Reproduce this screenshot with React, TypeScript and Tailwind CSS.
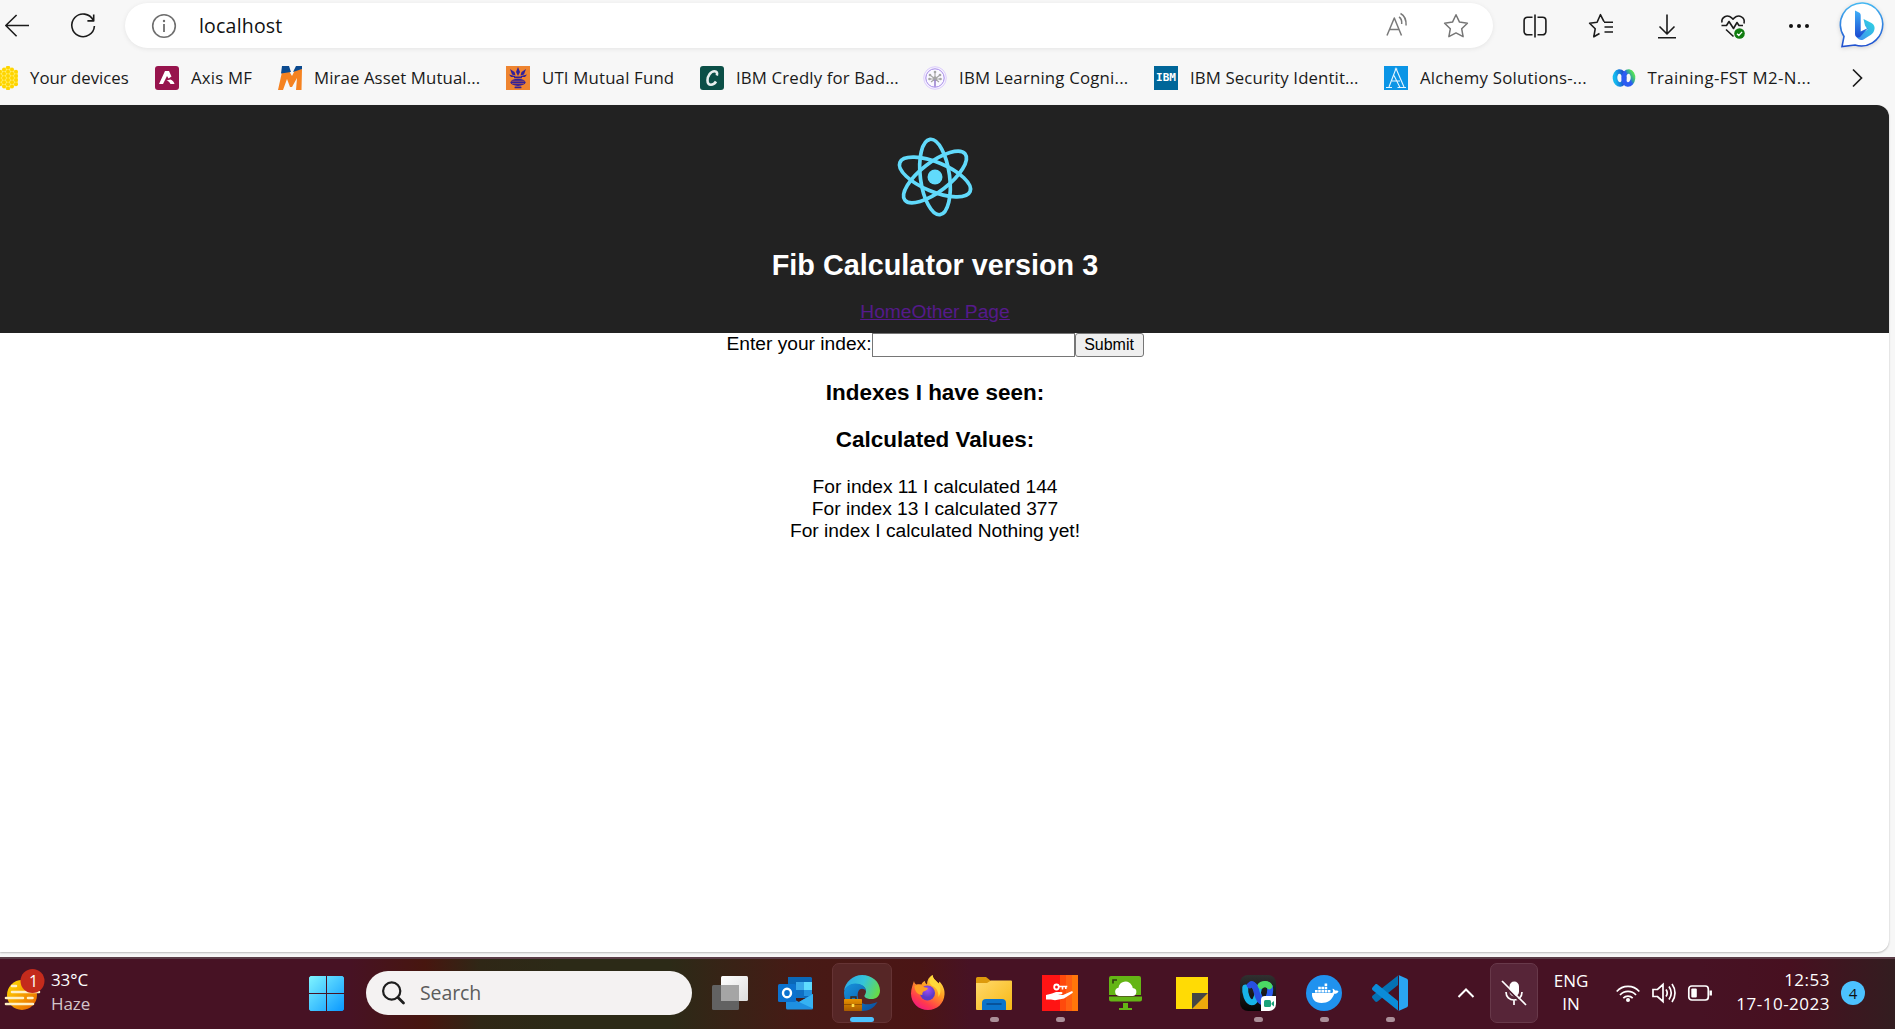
import React from "react";

type Children = { children?: React.ReactNode };

const ui = "font-['Open_Sans','Noto_Sans',sans-serif]";

/* ---------- browser toolbar ---------- */

function Line({ children, size = 24, color = "#1b1b1b", sw = 1.6 }: Children & { size?: number; color?: string; sw?: number }) {
  return (
    <svg width={size} height={size} viewBox="0 0 24 24" fill="none" stroke={color} strokeWidth={sw} className="block shrink-0 overflow-visible" strokeLinejoin="round">
      {children}
    </svg>
  );
}

function Slot({ children }: Children) {
  return <div className="flex w-[66px] shrink-0 items-center justify-center">{children}</div>;
}

function BingIcon() {
  return (
    <svg width="46" height="47" viewBox="0 0 46 47" className="block overflow-visible drop-shadow-sm">
      <defs>
        <linearGradient id="bing-ring" x1="0" y1="0" x2="0" y2="1">
          <stop offset="0" stopColor="#45b8f2" />
          <stop offset="1" stopColor="#2050cf" />
        </linearGradient>
        <linearGradient id="bing-stem" x1="0" y1="0" x2="0" y2="1">
          <stop offset="0" stopColor="#3fb0f8" />
          <stop offset="1" stopColor="#1a49d0" />
        </linearGradient>
        <linearGradient id="bing-bowl" x1="1" y1="0" x2="0" y2="1">
          <stop offset="0" stopColor="#2fd8e0" />
          <stop offset="1" stopColor="#3f8cf0" />
        </linearGradient>
      </defs>
      <path d="M23 1a21.500 21.500 0 1 1-8 42l-13 1.500 2-10A21.500 21.500 0 0 1 23 1z" fill="#fff" stroke="url(#bing-ring)" strokeWidth="1.600" />
      <path d="M23.500 17l8 4c3 1.700 3.800 5 2.500 8-.8 2-2.500 3.600-5 5l-5.500 3.500c-2.500 1.200-5 .5-7-2.500l11-7.500-2.500-4z" fill="url(#bing-bowl)" />
      <path d="M15 8.500l4 2c1.200.6 1.700 1.500 1.700 2.800v16.200l7.300-3.500-8 9c-2.500 1.500-5 0-5-3z" fill="url(#bing-stem)" />
    </svg>
  );
}

function Toolbar() {
  return (
    <div className="flex h-[51px] shrink-0 items-center">
      <div className="flex w-[125px] shrink-0 items-center pl-[5px]">
        <Line>
          <path d="M24 11.500H.8M11.600 1L.8 11.500l10.800 10.700" />
        </Line>
        <div className="ml-[42px]">
          <Line>
            <path d="M22.200 6.200A11.300 11.300 0 1 0 23.400 12M22.700.6v6.300h-6.300" />
          </Line>
        </div>
      </div>
      <div className="flex h-[45px] w-[1368px] shrink-0 items-center rounded-full bg-white pl-[27px] shadow-[0_1px_5px_rgba(0,0,0,0.08)]">
        <Line color="#6e6e6e">
          <circle cx="12" cy="12" r="11.300" />
          <path d="M12 10v8" strokeWidth="1.800" />
          <circle cx="12" cy="7" r="1.200" fill="#6e6e6e" stroke="none" />
        </Line>
        <span className="ml-[23px] text-[19.500px] tracking-[0.2px] text-[#111]">localhost</span>
        <div className="ml-auto flex items-center pr-[25px]">
          <Line color="#7a7a7a" sw={1.5}>
            <path d="M1 22L8.300 4.500 15.500 22M3.600 16h9.400M13 3.500c2 1.200 3 3.800 2.700 7M14.500 0c4 2 5.800 6 5.600 12" transform="translate(0 -.5)" />
          </Line>
          <div className="ml-[34px]">
            <Line color="#767676" sw={1.5}>
              <path d="M12 .8l3.500 7.300 7.900 1.100-5.700 5.600 1.400 7.900L12 18.900l-7.100 3.800 1.400-7.900L.6 9.200l7.900-1.100z" />
            </Line>
          </div>
        </div>
      </div>
      <div className="ml-[8.500px] flex items-center">
        <Slot>
          <Line>
            <path d="M9.500 3.200H4.400A3.300 3.300 0 0 0 1.100 6.500v11a3.300 3.300 0 0 0 3.300 3.300h5.100M14.500 3.200h5.100a3.300 3.300 0 0 1 3.300 3.300v11a3.300 3.300 0 0 1-3.300 3.300h-5.100M12 .5v23" />
          </Line>
        </Slot>
        <Slot>
          <Line>
            <path d="M15 7.700l-3.600-7-3.300 7.500-7.500 1 5.600 5.600-1.400 8 5.700-3.300M15 8.200h9M15.500 13h8.500M15.500 18h8.500" />
          </Line>
        </Slot>
        <Slot>
          <Line>
            <path d="M12 .5v19M4.500 12.500L12 20l7.500-7.500M3 23.800h18" />
          </Line>
        </Slot>
        <Slot>
          <Line>
            <path d="M1 8.500C0 3.500 6-.5 11 4.200l1 1 1-1C18-.5 24.500 3.500 23 9.500M.5 11.500h5l2.500-4 4.500 7 3.500-6 2 3h4M5 15.500l7.500 7" />
            <circle cx="18.500" cy="19.500" r="5.300" fill="#107c10" stroke="none" />
            <path d="M16 19.700l1.800 1.800 3.300-3.600" stroke="#fff" strokeWidth="1.300" />
          </Line>
        </Slot>
        <Slot>
          <svg width="22" height="6" viewBox="0 0 22 6" className="block fill-[#111]">
            <circle cx="3" cy="3" r="2" />
            <circle cx="11" cy="3" r="2" />
            <circle cx="19" cy="3" r="2" />
          </svg>
        </Slot>
        <div className="ml-[8px]">
          <BingIcon />
        </div>
      </div>
    </div>
  );
}

/* ---------- bookmarks ---------- */

function Fav({ children }: Children) {
  return (
    <svg width="24" height="24" viewBox="0 0 24 24" className="block shrink-0">
      {children}
    </svg>
  );
}

const honey: [number, number][] = [];
[
  [2, 3],
  [6, 4],
  [10, 5],
  [14, 6],
  [18, 5],
  [22, 4],
].forEach(([x, n]) => {
  for (let i = 0; i < n; i++) honey.push([x, 12 + (i - (n - 1) / 2) * 4.2]);
});

const bookmarks: { label: string; width: string; tracking: string; icon: React.ReactNode }[] = [
  {
    label: "Your devices",
    width: "w-[161px]",
    tracking: "tracking-normal",
    icon: (
      <Fav>
        <path d="M14 0l10 6v12l-10 6-10-6V6z" fill="#ffee70" />
        {honey.map(([x, y], i) => (
          <circle key={i} cx={x} cy={y} r="2" fill="#ffd500" />
        ))}
      </Fav>
    ),
  },
  {
    label: "Axis MF",
    width: "w-[123px]",
    tracking: "tracking-[0.2px]",
    icon: (
      <Fav>
        <rect width="24" height="24" rx="3" fill="#97144d" />
        <path d="M10 5h4l2.500 5.500-3 2L12 10l-4 8H4z" fill="#fff" />
        <path d="M11.500 14.500l4-1c2 .5 3.500 2.500 4 4.500h-4c-1-2-2-3-4-3.500z" fill="#fff" />
      </Fav>
    ),
  },
  {
    label: "Mirae Asset Mutual...",
    width: "w-[228px]",
    tracking: "tracking-[0.100px]",
    icon: (
      <Fav>
        <path d="M4 6l7-1 3 5 3-6 7-1-.5 21H18l1-12-5 9h-2L9 13 5 24H0z" fill="#f58220" />
        <path d="M4 0h7l2 6-10 1.500zM18 0h6v3l-9 3z" fill="#0b4a8f" />
      </Fav>
    ),
  },
  {
    label: "UTI Mutual Fund",
    width: "w-[194px]",
    tracking: "tracking-[0.180px]",
    icon: (
      <Fav>
        <rect width="24" height="24" fill="#ee8430" />
        <g fill="#31209a">
          <path d="M12 1l2 5-2 4-2-4zM4 3l4.500 3 1 3.500-3.500-1zM20 3l-4.500 3-1 3.500 3.500-1zM3 8.500l6 1.500v1H5zM21 8.500L15 10v1h4z" />
          <rect x="8" y="10.500" width="8" height="1.800" rx=".9" />
          <ellipse cx="12" cy="16.300" rx="7.500" ry="3.600" />
          <rect x="8.500" y="20.500" width="7" height="1.800" rx=".9" />
        </g>
        <path d="M5.500 15.200h13M6 17.600h12" stroke="#b8604a" strokeWidth=".8" />
      </Fav>
    ),
  },
  {
    label: "IBM Credly for Bad...",
    width: "w-[223px]",
    tracking: "tracking-[0.150px]",
    icon: (
      <Fav>
        <rect width="24" height="24" rx="3" fill="#0b4f47" />
        <path d="M16.800 9.500c.8-2.500 0-4.300-2.300-4.300-4 0-7 5-7 9 0 3 1.300 4.500 3.500 4.500 2 0 3.800-1.200 5-3.200" fill="none" stroke="#e8efee" strokeWidth="2.600" />
      </Fav>
    ),
  },
  {
    label: "IBM Learning Cogni...",
    width: "w-[231px]",
    tracking: "tracking-[0.200px]",
    icon: (
      <Fav>
        <circle cx="12" cy="12" r="11.300" fill="#f6f2ff" stroke="#dccdfb" />
        <circle cx="12" cy="12" r="9.200" fill="#faf8ff" stroke="#a68be8" />
        <path d="M12 6v14M7 9l5 4 5-4M6.500 13H12h5.500M8 16l4-3 4 3" stroke="#a5a5a5" strokeWidth="1.100" fill="none" />
        <path d="M12 13v8" stroke="#9a7be0" strokeWidth="1.200" />
        <g fill="#a5a5a5">
          <circle cx="12" cy="6" r="1.300" />
          <circle cx="7" cy="9" r="1.300" />
          <circle cx="17" cy="9" r="1.300" />
          <circle cx="6.500" cy="13" r="1.300" />
          <circle cx="17.500" cy="13" r="1.300" />
          <circle cx="12" cy="12" r="1.800" />
        </g>
      </Fav>
    ),
  },
  {
    label: "IBM Security Identit...",
    width: "w-[230px]",
    tracking: "tracking-[0.120px]",
    icon: (
      <span className="flex size-6 shrink-0 items-center justify-center bg-[#006699] pb-[2px] font-['DejaVu_Sans_Mono',monospace] text-[11px] leading-none font-bold text-white">
        IBM
      </span>
    ),
  },
  {
    label: "Alchemy Solutions-...",
    width: "w-[227.500px]",
    tracking: "tracking-[0.230px]",
    icon: (
      <Fav>
        <rect width="24" height="24" fill="#0b95e6" />
        <path d="M2 21.500h6M13.500 21.500H22M5 21L12 2.500 20 21M8 15h8M10 9.500L16 21.500M10.800 3h2.500" fill="none" stroke="#e6f5ff" strokeWidth="1.100" />
      </Fav>
    ),
  },
  {
    label: "Training-FST M2-N...",
    width: "w-[230.500px]",
    tracking: "tracking-[0.350px]",
    icon: (
      <Fav>
        <defs>
          <linearGradient id="wx-left" x1="0" y1="0" x2="1" y2="0">
            <stop offset="0" stopColor="#14b8ee" />
            <stop offset="1" stopColor="#1c45c8" />
          </linearGradient>
          <linearGradient id="wx-right" x1="1" y1="0" x2=".2" y2=".8">
            <stop offset=".1" stopColor="#52e05a" />
            <stop offset=".45" stopColor="#2f9aa8" />
            <stop offset=".6" stopColor="#2c5cf2" />
          </linearGradient>
        </defs>
        <ellipse cx="7.700" cy="12" rx="4.700" ry="6.500" fill="none" stroke="url(#wx-left)" strokeWidth="4.600" transform="rotate(-6 7.700 12)" />
        <ellipse cx="16.300" cy="12" rx="4.700" ry="6.500" fill="none" stroke="url(#wx-right)" strokeWidth="4.600" transform="rotate(6 16.300 12)" />
      </Fav>
    ),
  },
];

function WebexMark() {
  return (
    <g fill="none" strokeWidth="4.600" strokeLinecap="round">
      <path d="M14 7c1.500-2 6-2.500 7.300.5" stroke="#4bd964" />
      <path d="M21.500 8c.8 4-1.500 11-4.800 11.500-3.500 0-5-13.500-9.500-14" stroke="#2a5bf0" />
      <path d="M13 8.500c-1 5-2.200 11-5.500 11C4 19.500 2 12 2.500 8" stroke="#17b4e8" />
      <path d="M6 6.500C8 4.500 9.500 6.500 10.500 9c1.300 4 2 9 4.500 10" stroke="#2850e0" />
      <path d="M14.500 6.800c1.500-1.600 5-1.800 6.500.4" stroke="#4bd964" />
    </g>
  );
}

function Bookmarks() {
  return (
    <div className="flex h-[54px] shrink-0 items-center">
      <div className="-ml-[6px] flex items-center">
        {bookmarks.map((b) => (
          <div key={b.label} className={`flex shrink-0 items-center gap-3 ${b.width}`}>
            {b.icon}
            <span className={`text-[16.800px] leading-6 whitespace-nowrap text-[#1a1a1a] ${b.tracking}`}>{b.label}</span>
          </div>
        ))}
      </div>
      <svg width="12" height="20" viewBox="0 0 12 20" className="ml-[9px] block" fill="none" stroke="#1b1b1b" strokeWidth="1.700">
        <path d="M2 1.500L10.500 10 2 18.500" />
      </svg>
    </div>
  );
}

/* ---------- web page ---------- */

function ReactLogo() {
  return (
    <svg width="136" height="96" viewBox="-68 -48 136 96" className="block" fill="none" stroke="#61dafb" strokeWidth="3.700">
      <ellipse rx="38" ry="14.600" transform="rotate(22.500)" />
      <ellipse rx="38" ry="14.600" transform="rotate(82.500)" />
      <ellipse rx="38" ry="14.600" transform="rotate(142.500)" />
      <circle r="7.500" fill="#61dafb" stroke="none" />
    </svg>
  );
}

const results = ["For index 11 I calculated 144", "For index 13 I calculated 377", "For index I calculated Nothing yet!"];

function WebPage() {
  return (
    <div className="h-[847px] w-[1889px] shrink-0 overflow-hidden rounded-r-[12px] bg-white font-['Liberation_Sans',Arial,sans-serif] text-[19.200px] leading-[22px] text-black shadow-[0_1px_2px_rgba(0,0,0,0.25)]">
      <header className="flex h-[228px] flex-col items-center bg-[#222] pt-6 pr-[19px]">
        <ReactLogo />
        <h1 className="mt-6 text-[28.800px] leading-[33px] font-bold text-white">Fib Calculator version 3</h1>
        <nav className="mt-[19px] text-[#551a8b] underline">
          <a>Home</a>
          <a>Other Page</a>
        </nav>
      </header>
      <main className="flex flex-col items-center pr-[19px]">
        <form className="flex h-6 items-start">
          <label>Enter your index:</label>
          <input className="h-6 w-[203px] border border-[#767676] bg-white" />
          <button type="button" className="h-6 w-[69px] rounded-[3px] border border-[#767676] bg-[#efefef] pb-px text-[16px] leading-[20px]">
            Submit
          </button>
        </form>
        <h3 className="mt-[23px] text-[22.460px] leading-[26px] font-bold">Indexes I have seen:</h3>
        <h3 className="mt-[21px] text-[22.460px] leading-[26px] font-bold">Calculated Values:</h3>
        <div className="mt-[23px] text-center">
          {results.map((r) => (
            <div key={r}>{r}</div>
          ))}
        </div>
      </main>
    </div>
  );
}

/* ---------- taskbar ---------- */

function App36({ children }: Children) {
  return (
    <svg width="36" height="36" viewBox="0 0 36 36" className="block overflow-visible">
      {children}
    </svg>
  );
}

function Tile({ children, running }: Children & { running?: boolean }) {
  return (
    <div className="relative flex h-[60px] w-[66px] shrink-0 items-center justify-center">
      {children}
      {running && <span className="absolute bottom-[1px] left-[28.500px] h-[5px] w-[9px] rounded-full bg-[#ab8f99]" />}
    </div>
  );
}

function Weather() {
  return (
    <svg width="42" height="42" viewBox="0 0 42 42" className="block">
      <defs>
        <linearGradient id="sun" x1="0" y1="0" x2="1" y2="1">
          <stop offset=".1" stopColor="#ffd400" />
          <stop offset="1" stopColor="#e85d00" />
        </linearGradient>
      </defs>
      <circle cx="18" cy="26" r="15" fill="url(#sun)" />
      <g stroke="#fff0c4" strokeWidth="2.600" strokeLinecap="round">
        <path d="M8 17h4M8 23h27M2 29h17M24 29h4.500M2 35h27" />
      </g>
      <circle cx="28.500" cy="12" r="12" fill="#c42b1c" />
      <text x="29.500" y="18" fill="#fff" fontSize="16" textAnchor="middle">
        1
      </text>
    </svg>
  );
}

function WindowsLogo() {
  return (
    <svg width="35" height="35" viewBox="0 0 35 35" className="block">
      <defs>
        <linearGradient id="win" gradientUnits="userSpaceOnUse" x1="0" y1="0" x2="35" y2="35">
          <stop offset="0" stopColor="#80f5ff" />
          <stop offset="1" stopColor="#0a98ff" />
        </linearGradient>
      </defs>
      <path d="M1.500 0H17v17H0V1.500zM18 0h15.500L35 1.500V17H18zM0 18h17v17H1.500L0 33.500zM18 18h17v15.500L33.500 35H18z" fill="url(#win)" />
    </svg>
  );
}

function Apps() {
  return (
    <div className="flex items-center">
      <Tile>
        <App36>
          <defs>
            <linearGradient id="tv" x1="0" y1="0" x2="1" y2="1">
              <stop offset="0" stopColor="#fff" />
              <stop offset="1" stopColor="#dcdcdc" />
            </linearGradient>
          </defs>
          <rect x="0" y="10" width="27" height="25" rx="1.500" fill="#626262" />
          <rect x="9" y="1" width="27" height="25" rx="1.500" fill="url(#tv)" />
          <path d="M9 10h18v16H9z" fill="#a5a5a5" />
        </App36>
      </Tile>
      <Tile>
        <App36>
          <path d="M10 2h23l1 1v20H10z" fill="#0a68b8" />
          <path d="M18 7h8v8h-8z" fill="#39a8ea" />
          <path d="M26 7h8v8h-8z" fill="#5fdcff" />
          <path d="M18 15h8v8h-8z" fill="#0f70c4" />
          <path d="M26 15h8v6h-8z" fill="#2493e0" />
          <path d="M8 20l13 7 14-8v14a1.500 1.500 0 0 1-1.500 1.500H9.500A1.500 1.500 0 0 1 8 33z" fill="#1f8fe0" />
          <path d="M21 27l14-8v14.500z" fill="#36b2f2" />
          <rect x="0" y="9" width="18" height="18" rx="1.500" fill="#0c72cf" />
          <ellipse cx="9" cy="18" rx="4" ry="4.300" fill="none" stroke="#fff" strokeWidth="2.400" />
        </App36>
      </Tile>
      <div className="relative mx-[3px] flex size-[60px] items-center justify-center rounded-[7px] border border-[#653334] bg-[#562626]">
        <App36>
          <defs>
            <linearGradient id="edge-top" x1="0" y1=".3" x2="1" y2=".6">
              <stop offset="0" stopColor="#2ba9e6" />
              <stop offset=".5" stopColor="#35c4d8" />
              <stop offset="1" stopColor="#68dc45" />
            </linearGradient>
            <linearGradient id="edge-mid" x1="0" y1="0" x2="1" y2="1">
              <stop offset="0" stopColor="#1693dd" />
              <stop offset="1" stopColor="#0a4d9c" />
            </linearGradient>
            <linearGradient id="case" x1="0" y1="0" x2="0" y2="1">
              <stop offset="0" stopColor="#e99300" />
              <stop offset="1" stopColor="#a95c00" />
            </linearGradient>
          </defs>
          <path d="M0 16C1 7 9 0 18 0c10 0 18 7 18 15.500 0 6-4 8.500-8.500 8.500-5 0-7.500-1.800-7-3.500.6-1 1.500-2 1.500-4.500 0-4-5-7-10.500-7C6.500 9 2.500 12 0 16z" fill="url(#edge-top)" />
          <path d="M0 18c0-5 5-9.500 11.500-9.500 5.500 0 10.500 3 10.500 7.500-1-1.500-2.500-2.200-4-2.200-3.500 0-5 4.200-4 9.200 1.500 6 8 8.500 19.500 4C30 33 25 36 18 36 8 36 0 28 0 18z" fill="url(#edge-mid)" />
          <path d="M7 24v-2h5v2" fill="none" stroke="#3f2410" strokeWidth="1.400" />
          <rect x="0" y="24" width="18" height="12" rx=".7" fill="url(#case)" />
          <path d="M0 29.500h18" stroke="#8a4a00" strokeWidth=".8" />
          <rect x="7.700" y="29" width="2.600" height="3" fill="#ffe04a" />
        </App36>
        <span className="absolute bottom-0 left-[17px] h-[5px] w-6 rounded-full bg-[#4cc2ff]" />
      </div>
      <Tile>
        <App36>
          <defs>
            <linearGradient id="fox" x1=".8" y1="0" x2=".2" y2="1">
              <stop offset="0" stopColor="#fff04a" />
              <stop offset=".4" stopColor="#ff9a22" />
              <stop offset=".75" stopColor="#ff3b4c" />
              <stop offset="1" stopColor="#f0128c" />
            </linearGradient>
            <radialGradient id="globe" cx=".5" cy=".3">
              <stop offset="0" stopColor="#a24df5" />
              <stop offset="1" stopColor="#5a3bc8" />
            </radialGradient>
          </defs>
          <path d="M4 6c.3 2 1 3 2.500 3.500 1.500-.5 3.500-.5 5 0C12 7.500 13.500 6.500 15 6c0 1.500.5 2.500 2 3.500C17 5 19 2 22.500 0c.5 4 3 5 6 8.500l1-2c3.500 4 5.500 8 5 13C34 28.500 27 35 18 35S1 28.500 1 18.500C1 14 3 9 4 6z" fill="url(#fox)" />
          <circle cx="17.500" cy="18" r="7.500" fill="url(#globe)" />
          <path d="M4.500 11c3-2 6.500-1.500 9 1 1.500.6 3 .7 4.500 1-.5 2-2.500 3-4.500 3.500-1 1-1.500 2-1 3.500-5 0-8-4-8-9z" fill="#ff9e24" />
          <path d="M22.500 0c.5 4 3 5 6 8.500 3 5 2.500 10 0 13.500 0-6-2-9-6-11C18.500 9 18.500 3 22.500 0z" fill="#ffd93a" />
        </App36>
      </Tile>
      <Tile running>
        <App36>
          <defs>
            <linearGradient id="folder" x1="0" y1="0" x2="1" y2="1">
              <stop offset="0" stopColor="#ffd96b" />
              <stop offset="1" stopColor="#f7b815" />
            </linearGradient>
          </defs>
          <path d="M0 3.500A1.500 1.500 0 0 1 1.500 2H10l5 4v6H0z" fill="#dd9a0c" />
          <path d="M0 8h11l4-2.500h20A1 1 0 0 1 36 6.500V34a1 1 0 0 1-1 1H1a1 1 0 0 1-1-1z" fill="url(#folder)" />
          <path d="M6 35v-7a4 4 0 0 1 4-4h16a4 4 0 0 1 4 4v7z" fill="#0b74cb" />
          <path d="M11 29h14" stroke="#07478a" strokeWidth="1.500" strokeLinecap="round" />
        </App36>
      </Tile>
      <Tile running>
        <App36>
          <path d="M0 0h18v36H0z" fill="#ff1414" />
          <path d="M18 0h6v36h-6z" fill="#ff4a0c" />
          <path d="M24 0h6v36h-6z" fill="#ff6012" />
          <path d="M30 0h6v36h-6z" fill="#ff760a" />
          <path d="M4 20l6-1.500 4-1.500h5.500c1.500.3 1.300 1.800 0 2.200L16 20h5l8-3.500c1.500-.6 2.500.5 1.500 1.500L22 23.500l-9 1.800L9 24.500H4z" fill="#fff" />
          <ellipse cx="14.500" cy="12" rx="2.300" ry="2.500" fill="none" stroke="#fff" strokeWidth="1.800" />
          <path d="M17 11.500h8.300M20.500 12v2.500M23.800 12v2" stroke="#fff" strokeWidth="1.600" />
        </App36>
      </Tile>
      <Tile>
        <App36>
          <path d="M3 1h28a2 2 0 0 1 2 2v17H1V3a2 2 0 0 1 2-2zM1 21.500h33v3a2 2 0 0 1-2 2H3a2 2 0 0 1-2-2zM15 28h5v5h4v2H11v-2h4z" fill="#64b515" />
          <path d="M5 8.500V5h4" fill="none" stroke="#2d3a10" strokeWidth="1.600" />
          <path d="M11 21a4.200 4.200 0 0 1-.5-8.300A7 7 0 0 1 23.500 10c.8 1 1.200 2 1.200 3a4 4 0 0 1-.7 8z" fill="#fff" />
        </App36>
      </Tile>
      <Tile>
        <App36>
          <path d="M2 2h32v18L20 34H2z" fill="#ffdb05" />
          <path d="M34 18v16H18z" fill="#eeaa0c" />
          <path d="M18 18h16L18 34z" fill="#454545" />
        </App36>
      </Tile>
      <Tile running>
        <App36>
          <defs>
            <linearGradient id="webex-bg" x1="0" y1="0" x2="0" y2="1">
              <stop offset="0" stopColor="#303030" />
              <stop offset="1" stopColor="#050505" />
            </linearGradient>
          </defs>
          <rect width="36" height="36" rx="8" fill="url(#webex-bg)" />
          <g transform="translate(2 2) scale(1.300)">
            <WebexMark />
          </g>
          <path d="M21 36V25a4 4 0 0 1 4-4h11v8a7 7 0 0 1-7 7z" fill="#fff" />
          <rect x="24" y="25" width="7" height="7" rx="1.500" fill="#1ba37a" />
          <path d="M31.500 28l2.500-2v5.500l-2.500-2z" fill="#1ba37a" />
        </App36>
      </Tile>
      <Tile running>
        <App36>
          <circle cx="18" cy="18" r="18" fill="#2092ef" />
          <g fill="#fff">
            <path d="M6 18h20c1.200-.2 1.300-2.500.5-4 .6-.8 1.500 0 2.500 1.500 1 0 2.500 0 3.500.7-.8 1.800-2.300 2.500-4.200 2.600C26 25 22 28 15.500 28 9 28 5.500 24 6 18z" />
            <path d="M9 15h2.600v2.500H9zM12.200 15h2.600v2.500h-2.600zM15.400 15H18v2.500h-2.600zM18.600 15h2.600v2.500h-2.600zM21.800 15h2.600v2.500h-2.600zM12.200 11.800h2.600v2.500h-2.600zM15.400 11.800H18v2.500h-2.600zM18.600 11.800h2.600v2.500h-2.600zM18.600 8.600h2.600v2.500h-2.600z" />
          </g>
        </App36>
      </Tile>
      <Tile running>
        <App36>
          <path d="M.7 23.500c-1-.9-1-2 0-2.900L26 0.500v9.500L5.500 26.500c-.8.600-1.700.5-2.300 0z" fill="#0471b3" />
          <path d="M.7 12.300c-1 .9-1 2 0 2.900L26 35.500V26L5.500 9.500c-.8-.6-1.700-.5-2.300 0z" fill="#0b8cd8" />
          <path d="M26.500 0L35 3.800c.6.300 1 .9 1 1.600v25.200c0 .7-.4 1.300-1 1.600L26.500 36C27 35.500 27 35 27 34V2c0-1 0-1.500-.5-2z" fill="#2aa5f2" />
        </App36>
      </Tile>
    </div>
  );
}

function TrayIcon({ children }: Children) {
  return (
    <svg width="24" height="24" viewBox="0 0 24 24" className="block shrink-0 overflow-visible" fill="none" stroke="#fff" strokeWidth="1.700">
      {children}
    </svg>
  );
}

function Taskbar() {
  return (
    <div className="mt-[5px] flex h-[72px] shrink-0 items-center border-t-2 border-[#5b3d47] bg-[linear-gradient(90deg,#471224_0px,#471224_350px,#47160f_425px,#2f2716_480px,#2c2a17_560px,#2c2a17_670px,#471a15_800px,#4b1515_920px,#471224_970px,#471224_1700px,#471020_1790px,#331d20_1895px)] pb-[2px] text-white">
      <div className="flex w-[309px] shrink-0 items-center pl-1">
        <div className="mb-[6px]">
          <Weather />
        </div>
        <div className="mb-[2px] ml-[5px] text-[17px] leading-[24px] tracking-[-0.1px]">
          <div>33°C</div>
          <div className="text-[#d3c5ca]">Haze</div>
        </div>
      </div>
      <WindowsLogo />
      <div className="mr-[5px] ml-[22px] flex h-11 w-[326px] shrink-0 items-center rounded-full bg-[#f4f2f2] pl-4">
        <svg width="24" height="24" viewBox="0 0 24 24" className="block" fill="none" stroke="#1e1e1e" strokeWidth="2.200">
          <circle cx="9.700" cy="10" r="8.600" />
          <path d="M16 16.500l5.500 5.500" strokeWidth="2.800" strokeLinecap="round" />
        </svg>
        <span className="ml-[14px] text-[19.500px] tracking-[-0.1px] text-[#5c5c5c]">Search</span>
      </div>
      <Apps />
      <svg width="18" height="12" viewBox="0 0 18 12" className="ml-[34px] block" fill="none" stroke="#fff" strokeWidth="2">
        <path d="M1.500 10L9 2.500l7.500 7.500" />
      </svg>
      <div className="ml-[15px] flex h-[60px] w-12 shrink-0 items-center justify-center rounded-[7px] border border-[#68394a] bg-[#572538]">
        <TrayIcon>
          <rect x="7.500" y="0.500" width="9.500" height="15" rx="4.700" fill="#fff" stroke="none" />
          <path d="M4 11c0 5 3.500 8 8 8s8-3 8-8M12 19v5" />
          <path d="M-.5 2l22 22" stroke="#572538" strokeWidth="2" />
          <path d="M0 0l24 24" />
        </TrayIcon>
      </div>
      <div className="mb-[2px] ml-[8px] w-[50px] text-center text-[17px] leading-[23px] tracking-normal">
        <div>ENG</div>
        <div>IN</div>
      </div>
      <div className="ml-[20px] flex items-center gap-3">
        <TrayIcon>
          <path d="M.7 10.500c6-6.800 16.600-6.800 22.600 0M4 14c4.300-4.800 11.700-4.800 16 0M7.300 17.200c2.600-2.800 6.800-2.800 9.400 0" />
          <circle cx="12" cy="19" r="2" fill="#fff" stroke="none" />
        </TrayIcon>
        <TrayIcon>
          <path d="M1 8.500h4.500L11 3.500v17l-5.500-5H1zM14 8.500c1.400 2 1.400 5 0 7M17 5.500c2.800 4 2.800 9 0 13M20 3c4 5.500 4 12.500 0 18" />
        </TrayIcon>
        <TrayIcon>
          <rect x=".8" y="5" width="19.500" height="14" rx="3" />
          <rect x="3.300" y="7.500" width="5.500" height="9" rx="1" fill="#fff" stroke="none" />
          <path d="M22.700 9.500v5" strokeWidth="2.500" />
        </TrayIcon>
      </div>
      <div className="mb-[2px] ml-[17px] w-[101px] text-right text-[17px] leading-6 tracking-[0.500px]">
        <div>12:53</div>
        <div>17-10-2023</div>
      </div>
      <div className="ml-[11px] flex size-6 items-center justify-center rounded-full bg-[#4cc2ff] text-[15px] leading-none text-[#111]">4</div>
    </div>
  );
}

export default function App() {
  return (
    <div className={`flex h-[1029px] w-[1895px] flex-col overflow-hidden bg-[#f7f7f7] ${ui}`}>
      <Toolbar />
      <Bookmarks />
      <WebPage />
      <Taskbar />
    </div>
  );
}
